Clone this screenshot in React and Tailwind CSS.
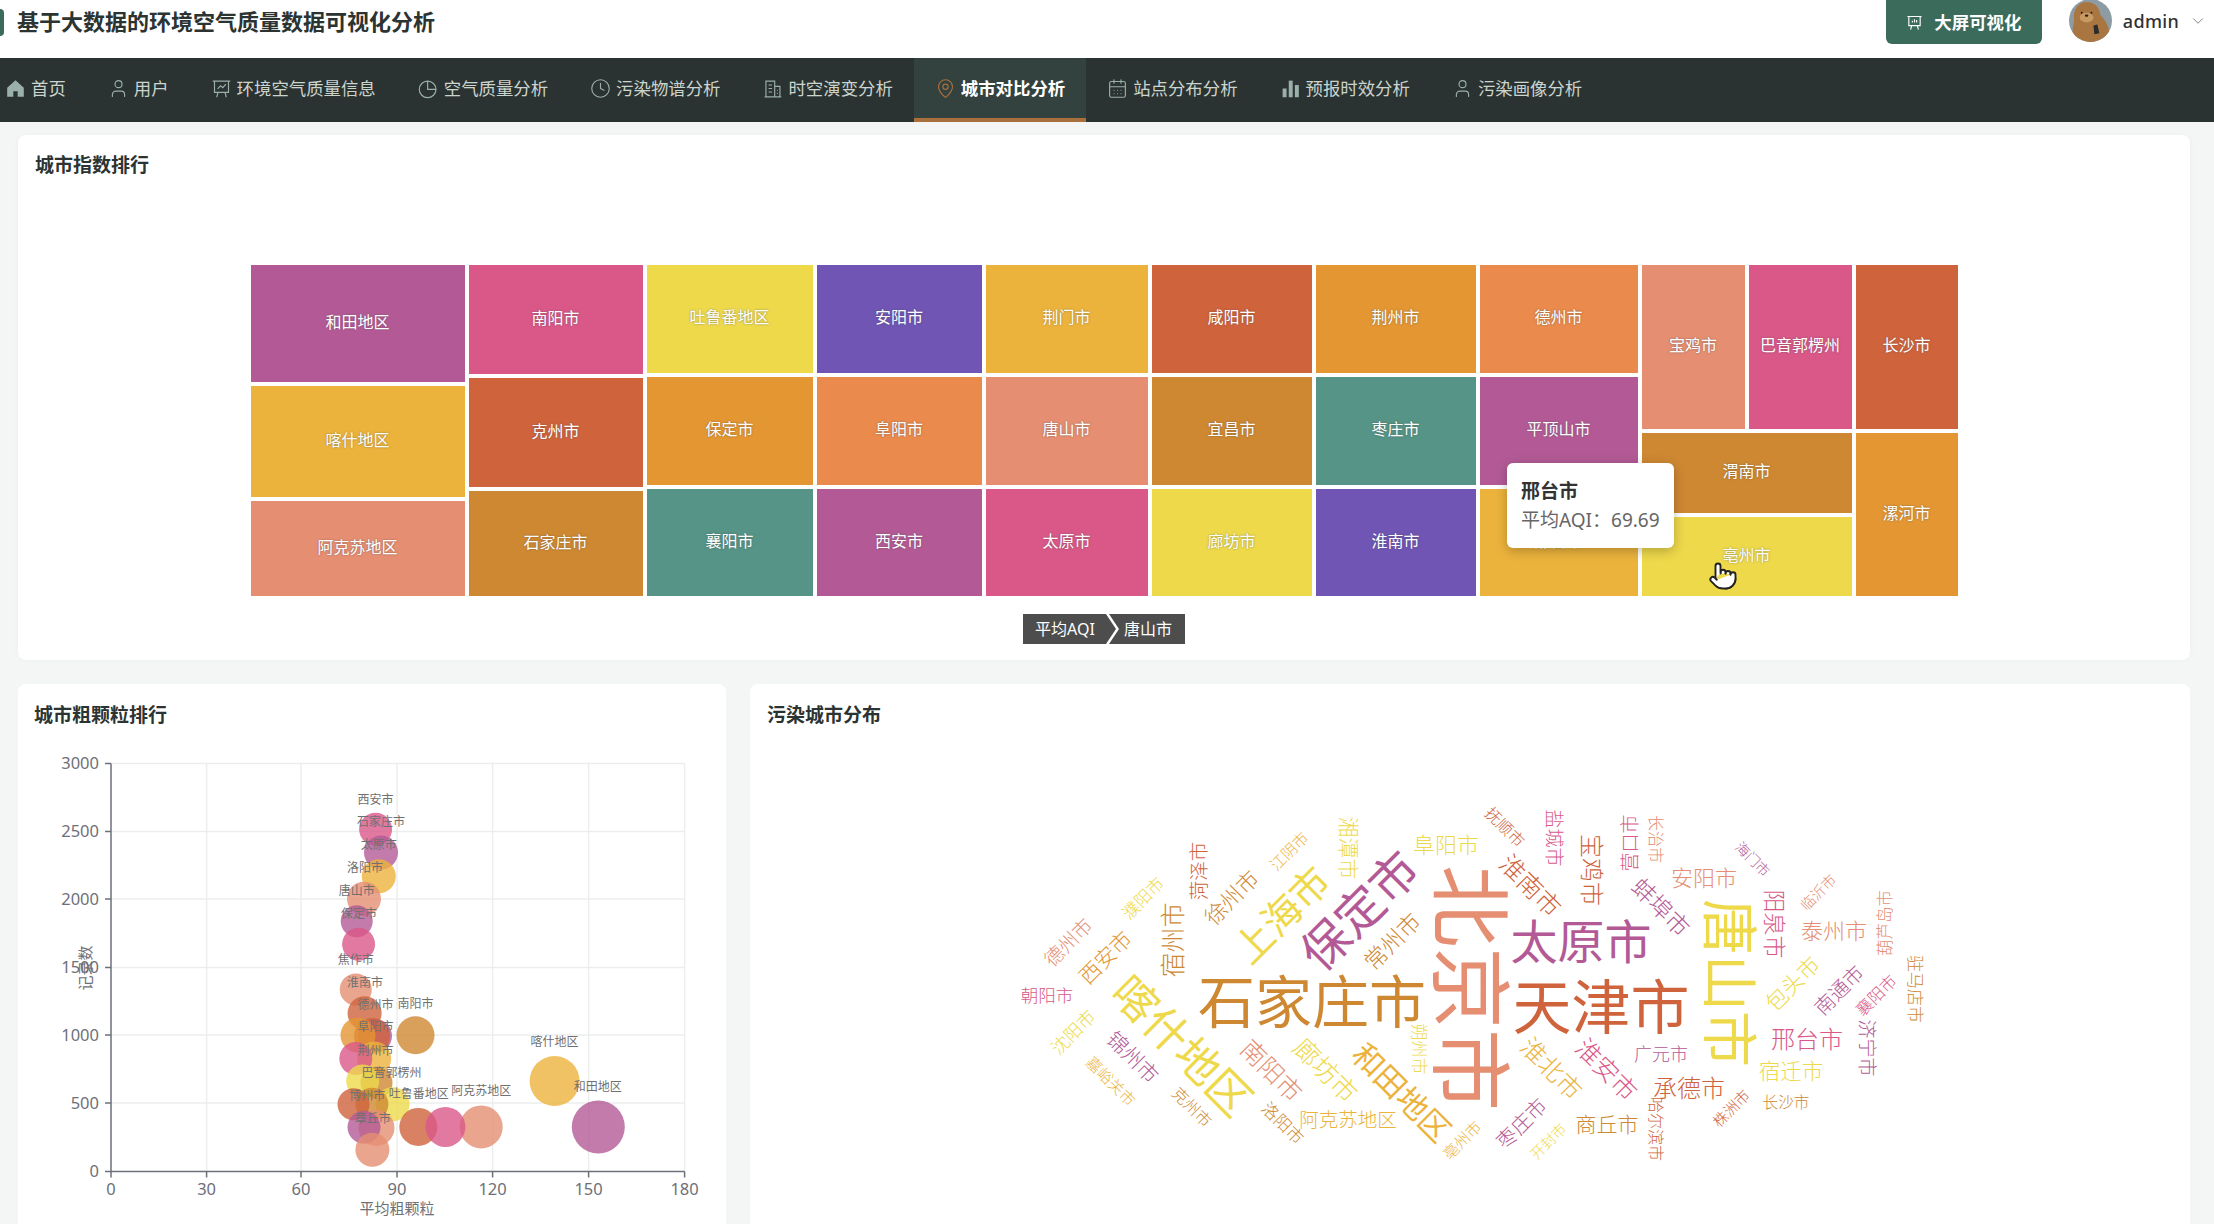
import { User, Clock, MapPin, CalendarDays, ChevronDown, Pointer } from 'lucide-react'

const PURPLE = '#b35a96'
const PINK = '#d95888'
const YELLOW = '#eed94b'
const AMBER = '#ecb33c'
const RED = '#cf633c'
const ORANGE = '#e39632'
const SALMON = '#e58e72'
const BROWN = '#ce8832'

const HomeIcon = (props) => (
  <svg viewBox="0 0 24 24" fill="currentColor" {...props}>
    <path d="M12 2.5 2.5 11v10.5h7V15h5v6.5h7V11z" />
  </svg>
)

const BoardIcon = ({ bars, ...props }) => (
  <svg viewBox="0 0 24 24" fill="none" stroke="currentColor" strokeWidth="1.6" {...props}>
    <path d="M2 3.5h20M4 3.5v13h16v-13M8 16.5 6.5 22M16 16.5l1.5 5.5" />
    {bars ? <path d="M9 12V9.5M12 12V7.5M15 12V8.5" /> : <path d="m7.5 12.5 3.5-3.5 2.5 2 3.5-4" />}
  </svg>
)

const PieIcon = (props) => (
  <svg viewBox="0 0 24 24" fill="none" stroke="currentColor" strokeWidth="1.5" {...props}>
    <path d="M11 3.5a9.5 9.5 0 1 0 9.5 9.5H11z" />
    <path d="M11 3.5a9.5 9.5 0 0 1 9.5 9.5" />
  </svg>
)

const OfficeIcon = (props) => (
  <svg viewBox="0 0 24 24" fill="none" stroke="currentColor" strokeWidth="1.5" {...props}>
    <path d="M3 21.5h19M4.5 21.5v-18h10v18M14.5 9.5h6v12M7.5 8h4M7.5 12h4M7.5 16h4M17 14h1M17 17.5h1" />
  </svg>
)

const BarsIcon = (props) => (
  <svg viewBox="0 0 24 24" fill="currentColor" {...props}>
    <rect x="3" y="12" width="4.5" height="10" />
    <rect x="10" y="3" width="4.5" height="19" />
    <rect x="17" y="8" width="4.5" height="14" />
  </svg>
)

const navItems = [
  { label: '首页', icon: HomeIcon },
  { label: '用户', icon: User },
  { label: '环境空气质量信息', icon: BoardIcon },
  { label: '空气质量分析', icon: PieIcon },
  { label: '污染物谱分析', icon: Clock },
  { label: '时空演变分析', icon: OfficeIcon },
  { label: '城市对比分析', icon: MapPin, active: true },
  { label: '站点分布分析', icon: CalendarDays },
  { label: '预报时效分析', icon: BarsIcon },
  { label: '污染画像分析', icon: User },
]

const treeCols = [
  {
    w: 'w-[214px]',
    cells: [
      ['和田地区', 'bg-[#b35a96] h-[117px]'],
      ['喀什地区', 'bg-[#ecb33c] h-[111px]'],
      ['阿克苏地区', 'bg-[#e58e72] h-[95px]'],
    ],
  },
  {
    w: 'w-[174px]',
    cells: [
      ['南阳市', 'bg-[#d95888] h-[109px]'],
      ['克州市', 'bg-[#cf633c] h-[109px]'],
      ['石家庄市', 'bg-[#ce8832] h-[105px]'],
    ],
  },
  {
    w: 'w-[166px]',
    cells: [
      ['吐鲁番地区', 'bg-[#eed94b] h-[108px]'],
      ['保定市', 'bg-[#e39632] h-[108px]'],
      ['襄阳市', 'bg-[#559486] h-[107px]'],
    ],
  },
  {
    w: 'w-[165px]',
    cells: [
      ['安阳市', 'bg-[#7055b4] h-[108px]'],
      ['阜阳市', 'bg-[#ea8a4c] h-[108px]'],
      ['西安市', 'bg-[#b35a96] h-[107px]'],
    ],
  },
  {
    w: 'w-[162px]',
    cells: [
      ['荆门市', 'bg-[#ecb33c] h-[108px]'],
      ['唐山市', 'bg-[#e58e72] h-[108px]'],
      ['太原市', 'bg-[#d95888] h-[107px]'],
    ],
  },
  {
    w: 'w-[160px]',
    cells: [
      ['咸阳市', 'bg-[#cf633c] h-[108px]'],
      ['宜昌市', 'bg-[#ce8832] h-[108px]'],
      ['廊坊市', 'bg-[#eed94b] h-[107px]'],
    ],
  },
  {
    w: 'w-[160px]',
    cells: [
      ['荆州市', 'bg-[#e39632] h-[108px]'],
      ['枣庄市', 'bg-[#559486] h-[108px]'],
      ['淮南市', 'bg-[#7055b4] h-[107px]'],
    ],
  },
  {
    w: 'w-[158px]',
    cells: [
      ['德州市', 'bg-[#ea8a4c] h-[108px]'],
      ['平顶山市', 'bg-[#b35a96] h-[108px]'],
      ['邢台市', 'bg-[#ecb33c] h-[107px]'],
    ],
  },
]

function TreeCell({ name, className }) {
  return (
    <div className={`flex items-center justify-center pb-[4px] text-[16px] text-white [text-shadow:0_0_2px_rgba(70,70,70,0.6)] ${className}`}>
      {name}
    </div>
  )
}

const bubbles = [
  [375.6, 829.3, 16.5, PINK],
  [381, 852.6, 17, PURPLE],
  [378.8, 876.2, 17, AMBER],
  [364, 898.8, 17, SALMON],
  [356.7, 921.3, 16, PURPLE],
  [358.6, 944.2, 16.5, PINK],
  [355.8, 989.4, 16, SALMON],
  [364.6, 1013.3, 17, RED],
  [415.5, 1035.2, 19, BROWN],
  [375, 1035.9, 17, PURPLE],
  [372, 1035.9, 18, RED],
  [358, 1035.2, 17.5, ORANGE],
  [374.2, 1058.5, 17, AMBER],
  [355.8, 1058.5, 16.5, PINK],
  [376.5, 1082.8, 16, BROWN],
  [362.7, 1081, 16.5, YELLOW],
  [392.6, 1104.3, 17, YELLOW],
  [371.9, 1104.3, 16.5, BROWN],
  [353.5, 1104.3, 16, RED],
  [376.5, 1127.9, 18, SALMON],
  [364, 1127.2, 16.5, PURPLE],
  [481.2, 1126.9, 21.5, SALMON],
  [418.3, 1126.9, 19, RED],
  [445.4, 1126.9, 20, PINK],
  [598.3, 1126.9, 26.5, PURPLE],
  [554.6, 1081, 25, AMBER],
  [372.4, 1149.8, 17, SALMON],
]

const bubbleLabels = [
  ['西安市', 375.6, 799],
  ['石家庄市', 381, 821.7],
  ['太原市', 378.8, 844.2],
  ['洛阳市', 365, 867.5],
  ['唐山市', 356.7, 890.8],
  ['保定市', 359, 913.7],
  ['焦作市', 355.8, 959.5],
  ['淮南市', 365, 982],
  ['德州市', 375.6, 1004],
  ['南阳市', 415.5, 1003],
  ['阜阳市', 375.6, 1026.5],
  ['荆州市', 375.6, 1050.5],
  ['巴音郭楞州', 391.6, 1072.4],
  ['博州市', 367.3, 1095.6],
  ['吐鲁番地区', 418.7, 1093.2],
  ['阿克苏地区', 481.2, 1090.8],
  ['和田地区', 597.8, 1086.3],
  ['喀什地区', 554.6, 1041.8],
  ['章丘市', 372.8, 1118.5],
]

const xTicks = [[0, 111], [30, 206.6], [60, 301], [90, 397], [120, 492.6], [150, 588.6], [180, 684.6]]
const yTicks = [[0, 1171.5], [500, 1103], [1000, 1035], [1500, 967.5], [2000, 899], [2500, 831.5], [3000, 763.5]]

function ScatterChart() {
  return (
    <svg viewBox="18 740 708 484" className="block h-[484px] w-[708px]">
      {xTicks.slice(1).map(([, x]) => (
        <line key={x} x1={x} x2={x} y1="763.5" y2="1171.5" stroke="#eceeee" strokeWidth="1.5" />
      ))}
      {yTicks.slice(1).map(([, y]) => (
        <line key={y} x1="111" x2="684.6" y1={y} y2={y} stroke="#eceeee" strokeWidth="1.5" />
      ))}
      <path d="M111 763.5V1171.5H684.6" fill="none" stroke="#6e7079" strokeWidth="1.5" />
      {xTicks.map(([v, x]) => (
        <g key={v}>
          <line x1={x} x2={x} y1="1171.5" y2="1177.5" stroke="#6e7079" strokeWidth="1.5" />
          <text x={x} y="1188.5" fontSize="16.5" fill="#6e7079" textAnchor="middle" dominantBaseline="central">{v}</text>
        </g>
      ))}
      {yTicks.map(([v, y]) => (
        <g key={v}>
          <line x1="105" x2="111" y1={y} y2={y} stroke="#6e7079" strokeWidth="1.5" />
          <text x="99" y={y - 1} fontSize="16.5" fill="#6e7079" textAnchor="end" dominantBaseline="central">{v}</text>
        </g>
      ))}
      <text x="397" y="1208" fontSize="15" fill="#6e7079" textAnchor="middle" dominantBaseline="central">平均粗颗粒</text>
      <text x="85" y="968" fontSize="15" fill="#6e7079" textAnchor="middle" dominantBaseline="central" transform="rotate(-90 85 968)">记录数</text>
      {bubbles.map(([cx, cy, r, color], i) => (
        <circle key={i} cx={cx} cy={cy} r={r} fill={color} fillOpacity="0.8" />
      ))}
      {bubbleLabels.map(([name, x, y]) => (
        <text key={name} x={x} y={y} fontSize="12" fill="#707070" textAnchor="middle" dominantBaseline="central">{name}</text>
      ))}
    </svg>
  )
}

// name, x, y, font size, rotation, colour
const words = [
  ['石家庄市', 1312, 1001, 57, 0, BROWN],
  ['北京市', 1472, 988, 82, 90, SALMON],
  ['太原市', 1581, 941, 47, 0, PURPLE],
  ['天津市', 1601, 1006, 59, 0, RED],
  ['唐山市', 1731, 983, 56, 90, YELLOW],
  ['保定市', 1359, 910, 48, -45, PURPLE],
  ['上海市', 1281, 914, 39, -45, YELLOW],
  ['喀什地区', 1183, 1045, 44, 45, YELLOW],
  ['和田地区', 1402, 1092, 31, 45, AMBER],
  ['廊坊市', 1326, 1070, 26, 45, YELLOW],
  ['南阳市', 1272, 1070, 25, 45, SALMON],
  ['阿克苏地区', 1348, 1119, 19.5, 0, AMBER],
  ['洛阳市', 1283, 1123, 17, 45, BROWN],
  ['克州市', 1192, 1107, 16, 45, BROWN],
  ['嘉峪关市', 1111, 1081, 15.5, 45, AMBER],
  ['锦州市', 1133, 1057, 21, 45, PURPLE],
  ['沈阳市', 1073, 1032, 18, -45, YELLOW],
  ['朝阳市', 1047, 995, 17.5, 0, PINK],
  ['德州市', 1068, 942, 19.5, -45, SALMON],
  ['西安市', 1105, 957, 21.5, -45, ORANGE],
  ['濮阳市', 1143, 898, 17, -45, YELLOW],
  ['宿州市', 1172, 940, 25, -90, BROWN],
  ['菏泽市', 1198, 871, 19.5, -90, RED],
  ['徐州市', 1231, 897, 22, -45, BROWN],
  ['江阴市', 1289, 851, 15.5, -45, AMBER],
  ['湘潭市', 1349, 848, 21, 90, YELLOW],
  ['常州市', 1392, 941, 23, -45, BROWN],
  ['朔州市', 1419, 1049, 17, 90, YELLOW],
  ['亳州市', 1462, 1140, 15.5, -45, AMBER],
  ['阜阳市', 1446, 844, 22, 0, YELLOW],
  ['抚顺市', 1505, 827, 16, 45, RED],
  ['盐城市', 1554, 838, 19, 90, PINK],
  ['宝鸡市', 1592, 870, 24, 90, RED],
  ['淮南市', 1531, 885, 25, 45, RED],
  ['营口市', 1630, 843, 19, -90, PINK],
  ['长治市', 1656, 839, 16, 90, SALMON],
  ['安阳市', 1704, 877, 22, 0, SALMON],
  ['蚌埠市', 1661, 907, 23.5, 45, PURPLE],
  ['海门市', 1753, 859, 14, 45, PURPLE],
  ['临沂市', 1818, 892, 14.5, -45, SALMON],
  ['阳泉市', 1775, 924, 23, 90, PINK],
  ['泰州市', 1834, 930, 22, 0, SALMON],
  ['葫芦岛市', 1884, 923, 16.5, -90, SALMON],
  ['驻马店市', 1915, 989, 17, 90, BROWN],
  ['包头市', 1792, 983, 22, -45, YELLOW],
  ['南通市', 1839, 990, 20, -45, PURPLE],
  ['襄阳市', 1876, 995, 16.5, -45, PINK],
  ['济宁市', 1867, 1048, 19, 90, PURPLE],
  ['邢台市', 1807, 1038, 24, 0, PINK],
  ['宿迁市', 1791, 1070, 21.5, 0, YELLOW],
  ['广元市', 1661, 1054, 18, 0, PURPLE],
  ['承德市', 1689, 1087, 24, 0, RED],
  ['淮北市', 1552, 1068, 25, 45, AMBER],
  ['淮安市', 1607, 1069, 25, 45, PINK],
  ['商丘市', 1607, 1124, 21, 0, BROWN],
  ['枣庄市', 1521, 1123, 20.5, -45, PURPLE],
  ['开封市', 1548, 1141, 14.5, -45, YELLOW],
  ['哈尔滨市', 1656, 1129, 16, 90, RED],
  ['株洲市', 1731, 1108, 15, -45, RED],
  ['长沙市', 1786, 1102, 15.6, 0, BROWN],
]

function WordCloud() {
  return (
    <svg viewBox="750 740 1440 484" className="block h-[484px] w-[1440px]">
      {words.map(([name, x, y, size, angle, color]) => (
        <text
          key={name + x}
          x={x}
          y={y}
          fontSize={size}
          fontWeight={size >= 30 ? 400 : 300}
          fill={color}
          textAnchor="middle"
          dominantBaseline="central"
          transform={`rotate(${angle} ${x} ${y})`}
        >
          {name}
        </text>
      ))}
    </svg>
  )
}

function Avatar() {
  return (
    <svg viewBox="0 0 44 44" className="-mt-px h-[43px] w-[43px] rounded-full">
      <rect width="44" height="44" fill="#8d9ba3" />
      <path d="M5 18C5 9 11 3 18 3s13 4 14 13c5 5 10 13 9 22-3 4-10 6-19 6-8 0-15-3-18-7-1-8 2-14 1-19z" fill="#a97540" />
      <ellipse cx="18" cy="19" rx="7" ry="5" fill="#c89a63" />
      <circle cx="13" cy="14" r="1" fill="#2c1d12" />
      <circle cx="23" cy="14" r="1" fill="#2c1d12" />
      <ellipse cx="18" cy="17" rx="1.8" ry="1.2" fill="#2c1d12" />
      <path d="M25 27l4-1 2 9-5 1z" fill="#2b2b2b" />
    </svg>
  )
}

export default function App() {
  return (
    <div className="h-[1224px] overflow-hidden bg-[#f3f6f4] text-[#303133] font-['Noto_Sans','Noto_Sans_CJK_SC',sans-serif]">
      {/* Header */}
      <header className="flex h-[58px] items-start justify-between bg-white">
        <div className="flex h-[44px] items-center">
          <span className="h-[27px] w-[4px] rounded-r-sm bg-[#3b6b5b]" />
          <h1 className="ml-[13px] pb-[2px] text-[22px] font-bold text-[#2b3432]">基于大数据的环境空气质量数据可视化分析</h1>
        </div>
        <div className="flex items-start">
          <button className="flex h-[44px] w-[156px] items-center justify-center gap-[11px] rounded-b-md bg-[#3b6b5b] text-[17.4px] font-bold text-white">
            <BoardIcon bars className="h-[17px] w-[17px]" />
            大屏可视化
          </button>
          <div className="ml-[27px] flex items-center pr-[7px]">
            <Avatar />
            <span className="ml-[11px] text-[18px] font-medium tracking-[0.3px]">admin</span>
            <ChevronDown size={18} strokeWidth={1.2} className="ml-[10px] text-[#73767a]" />
          </div>
        </div>
      </header>

      {/* Nav */}
      <nav className="flex h-[64px] bg-[#2a3331]">
        <div className="-ml-[16px] flex">
          {navItems.map((item) => (
            <a
              key={item.label}
              className={
                item.active
                  ? 'flex items-center gap-[5px] border-b-4 border-[#a9703d] bg-[#33423e] px-[21px] pt-[1px] text-[17.4px] font-bold text-white'
                  : 'flex items-center gap-[5px] border-b-4 border-transparent px-[21px] pt-[1px] text-[17.4px] text-[#ccd4ce]'
              }
            >
              <item.icon
                size={21}
                strokeWidth={1.3}
                className={item.active ? 'h-[21px] w-[21px] text-[#a9703d]' : 'h-[21px] w-[21px] text-[#9cb0aa]'}
              />
              {item.label}
            </a>
          ))}
        </div>
      </nav>

      <main className="pl-[18px] pr-[24px] pt-[13px]">
        {/* Treemap card */}
        <section className="relative rounded-lg bg-white pb-[16px] pt-[17px] shadow-[0_0_6px_rgba(0,0,0,0.03)]">
          <h2 className="h-[26px] pl-[17px] text-[19px] font-semibold leading-[26px] text-[#2b3432]">城市指数排行</h2>
          <div className="mx-auto mt-[87px] flex h-[331px] w-[1707px] gap-1">
            {treeCols.map((col) => (
              <div key={col.cells[0][0]} className={`flex flex-col gap-1 ${col.w}`}>
                {col.cells.map(([name, cls]) => (
                  <TreeCell key={name} name={name} className={cls} />
                ))}
              </div>
            ))}
            <div className="flex w-[316px] flex-col gap-1">
              <div className="flex h-[164px] gap-1">
                <TreeCell name="宝鸡市" className="w-[103px] bg-[#e58e72]" />
                <TreeCell name="巴音郭楞州" className="w-[103px] bg-[#d95888]" />
                <TreeCell name="长沙市" className="w-[102px] bg-[#cf633c]" />
              </div>
              <div className="flex h-[163px] gap-1">
                <div className="flex w-[210px] flex-col gap-1">
                  <TreeCell name="渭南市" className="h-[80px] bg-[#ce8832]" />
                  <TreeCell name="亳州市" className="h-[79px] bg-[#eed94b]" />
                </div>
                <TreeCell name="漯河市" className="w-[102px] bg-[#e39632]" />
              </div>
            </div>
          </div>
          <div className="mt-[18px] flex h-[30px] justify-center text-[16px] text-white">
            <span className="flex w-[93px] items-center bg-[#4d4d4d] pl-[12px] [clip-path:polygon(0_0,83px_0,93px_50%,83px_100%,0_100%)]">平均AQI</span>
            <span className="-ml-[7px] flex w-[76px] items-center bg-[#4d4d4d] pl-[15px] [clip-path:polygon(0_0,100%_0,100%_100%,0_100%,10px_50%)]">唐山市</span>
          </div>

          {/* Tooltip and pointer over the treemap */}
          <div className="absolute left-[1489px] top-[328px] h-[85px] w-[167px] rounded-md bg-white pl-[14px] pt-[15px] text-[#666] shadow-[0_3px_12px_rgba(0,0,0,0.25)]">
            <p className="text-[19px] font-bold leading-[26px] text-[#333]">邢台市</p>
            <p className="mt-[3px] text-[19px] leading-[26px]">平均AQI：69.69</p>
          </div>
          <Pointer size={30} strokeWidth={1.5} className="absolute left-[1690px] top-[426px] fill-white text-[#222]" />
        </section>

        {/* Bottom row */}
        <div className="mt-6 flex gap-6">
          <section className="w-[708px] rounded-t-lg bg-white pt-[18px]">
            <h2 className="h-[26px] pl-[16px] text-[19px] font-semibold leading-[26px] text-[#2b3432]">城市粗颗粒排行</h2>
            <div className="mt-3">
              <ScatterChart />
            </div>
          </section>
          <section className="w-[1440px] rounded-t-lg bg-white pt-[18px]">
            <h2 className="h-[26px] pl-[17px] text-[19px] font-semibold leading-[26px] text-[#2b3432]">污染城市分布</h2>
            <div className="mt-3">
              <WordCloud />
            </div>
          </section>
        </div>
      </main>
    </div>
  )
}
